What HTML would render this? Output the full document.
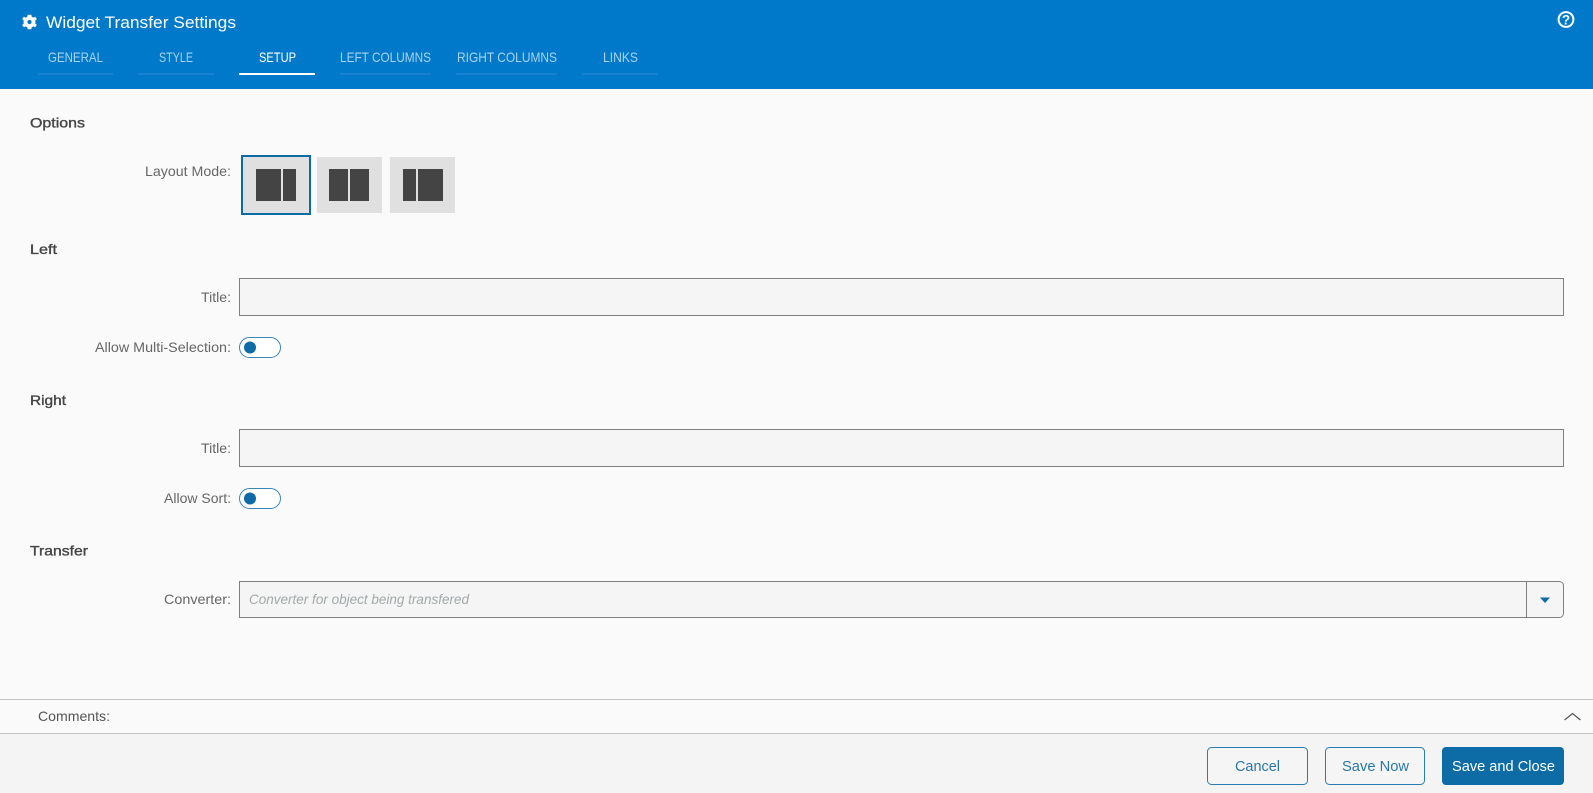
<!DOCTYPE html>
<html lang="en"><head><meta charset="utf-8"><title>Widget Transfer Settings</title>
<style>
html,body{margin:0;padding:0;background:#fafafa;width:1593px;height:793px;overflow:hidden}
svg{display:block;position:absolute;left:0;top:0}
text{font-family:"Liberation Sans",sans-serif;font-size:14px;fill:#666}
.tab{fill:#a9d3ef}
.h{fill:#444;stroke:#444;stroke-width:.35px;font-size:14px}
.u{fill:#1a80d2}
.box{fill:#f5f5f5;stroke:#808080;stroke-width:1}
.tg{fill:#fff;stroke:#3a85b8;stroke-width:1}
.btn{fill:#f5f5f5;stroke:#2a7cb0;stroke-width:1}
.bt{font-size:15px;fill:#2a78ab}
.d{fill:#444}
.lb{fill:#e0e0e0}
</style></head><body>
<svg width="1593" height="793" viewBox="0 0 1593 793" xmlns="http://www.w3.org/2000/svg">
<rect width="1593" height="793" fill="#fafafa"/>
<rect width="1593" height="89" fill="#0079cb"/>

<!-- gear -->
<g transform="translate(29.5,22)" fill="#fff">
<path fill-rule="evenodd" d="M-1.8-7.2H1.8L2.2-5.2C2.8-5 3.3-4.7 3.8-4.4L5.6-5.3 7.4-3 5.8-1.6C5.9-1 5.9-.6 5.9 0S5.9 1 5.8 1.6L7.4 3 5.6 5.3 3.8 4.4C3.3 4.7 2.8 5 2.2 5.2L1.8 7.2H-1.8L-2.2 5.2C-2.8 5-3.3 4.7-3.8 4.4L-5.6 5.3-7.4 3-5.8 1.6C-5.9 1-5.9.6-5.9 0S-5.9-1-5.8-1.6L-7.4-3-5.6-5.3-3.8-4.4C-3.3-4.7-2.8-5-2.2-5.2ZM0-2.1A2.1 2.1 0 1 0 0 2.1 2.1 2.1 0 1 0 0-2.1Z"/>
</g>
<text x="46" y="28" textLength="190" lengthAdjust="spacingAndGlyphs" style="font-size:17px;fill:#fff">Widget Transfer Settings</text>

<!-- help -->
<circle cx="1566" cy="19.5" r="7.4" fill="none" stroke="#fff" stroke-width="2"/>
<text x="1566" y="24.5" text-anchor="middle" style="font-size:13.500px;font-weight:bold;fill:#fff">?</text>

<!-- tabs -->
<rect class="u" x="38" y="73" width="75" height="2"/>
<rect class="u" x="138" y="73" width="76" height="2"/>
<rect x="239" y="73" width="76" height="2" fill="#fff"/>
<rect class="u" x="340" y="73" width="91" height="2"/>
<rect class="u" x="456" y="73" width="101" height="2"/>
<rect class="u" x="582" y="73" width="76" height="2"/>
<text class="tab" x="48" y="62" textLength="55" lengthAdjust="spacingAndGlyphs">GENERAL</text>
<text class="tab" x="159" y="62" textLength="34" lengthAdjust="spacingAndGlyphs">STYLE</text>
<text x="259" y="62" textLength="37" lengthAdjust="spacingAndGlyphs" style="fill:#fff">SETUP</text>
<text class="tab" x="340" y="62" textLength="91" lengthAdjust="spacingAndGlyphs">LEFT COLUMNS</text>
<text class="tab" x="457" y="62" textLength="100" lengthAdjust="spacingAndGlyphs">RIGHT COLUMNS</text>
<text class="tab" x="603" y="62" textLength="35" lengthAdjust="spacingAndGlyphs">LINKS</text>

<!-- headings -->
<text class="h" x="30" y="127.500" textLength="55" lengthAdjust="spacingAndGlyphs">Options</text>
<text class="h" x="30" y="254" textLength="27" lengthAdjust="spacingAndGlyphs">Left</text>
<text class="h" x="30" y="405" textLength="36" lengthAdjust="spacingAndGlyphs">Right</text>
<text class="h" x="30" y="555.500" textLength="58" lengthAdjust="spacingAndGlyphs">Transfer</text>

<!-- labels -->
<text x="145" y="176" textLength="86" lengthAdjust="spacingAndGlyphs">Layout Mode:</text>
<text x="201" y="302" textLength="30" lengthAdjust="spacingAndGlyphs">Title:</text>
<text x="95" y="352" textLength="136" lengthAdjust="spacingAndGlyphs">Allow Multi-Selection:</text>
<text x="201" y="453" textLength="30" lengthAdjust="spacingAndGlyphs">Title:</text>
<text x="164" y="503" textLength="67" lengthAdjust="spacingAndGlyphs">Allow Sort:</text>
<text x="164" y="604" textLength="67" lengthAdjust="spacingAndGlyphs">Converter:</text>

<!-- layout buttons -->
<rect class="lb" x="242" y="156" width="68" height="58" stroke="#0d6ca6" stroke-width="2"/>
<rect class="lb" x="317" y="157" width="65" height="56"/>
<rect class="lb" x="390" y="157" width="65" height="56"/>
<rect class="d" x="256" y="169" width="25" height="32"/>
<rect class="d" x="283" y="169" width="13" height="32"/>
<rect class="d" x="329" y="169" width="19" height="32"/>
<rect class="d" x="350" y="169" width="19" height="32"/>
<rect class="d" x="403" y="169" width="13" height="32"/>
<rect class="d" x="418" y="169" width="25" height="32"/>

<!-- inputs -->
<rect class="box" x="239.500" y="278.500" width="1324" height="37"/>
<rect class="box" x="239.500" y="429.500" width="1324" height="37"/>

<!-- toggles -->
<rect class="tg" x="239.500" y="337.500" width="41" height="20" rx="10"/>
<circle cx="250" cy="347.500" r="6" fill="#0d6ca6"/>
<rect class="tg" x="239.500" y="488.500" width="41" height="20" rx="10"/>
<circle cx="250" cy="498.500" r="6" fill="#0d6ca6"/>

<!-- converter -->
<path class="box" d="M239.500 581.500H1559.500a4 4 0 0 1 4 4V613.500a4 4 0 0 1-4 4H239.500Z"/>
<path d="M1526.500 581.500V617.500" stroke="#808080" fill="none"/>
<path d="M1540 597.500H1550L1545 603Z" fill="#0d6ca6"/>
<text x="249" y="604" textLength="220" lengthAdjust="spacingAndGlyphs" style="font-style:italic;fill:#a3a9ab">Converter for object being transfered</text>

<!-- comments -->
<rect x="0" y="699" width="1593" height="1" fill="#c4c4c4"/>
<rect x="0" y="733" width="1593" height="60" fill="#f4f4f4"/>
<rect x="0" y="733" width="1593" height="1" fill="#c4c4c4"/>
<text x="38" y="721" textLength="72" lengthAdjust="spacingAndGlyphs" style="fill:#555">Comments:</text>
<path d="M1564.500 720L1572.500 713.500 1580.500 720" fill="none" stroke="#555" stroke-width="1.200"/>

<!-- buttons -->
<rect class="btn" x="1207.500" y="747.500" width="100" height="37" rx="4"/>
<rect class="btn" x="1325.500" y="747.500" width="99" height="37" rx="4"/>
<rect x="1442" y="747" width="122" height="38" rx="4" fill="#0d6ca6"/>
<text class="bt" x="1235" y="771" textLength="45" lengthAdjust="spacingAndGlyphs">Cancel</text>
<text class="bt" x="1342" y="771" textLength="67" lengthAdjust="spacingAndGlyphs">Save Now</text>
<text class="bt" x="1452" y="771" textLength="103" lengthAdjust="spacingAndGlyphs" style="fill:#fff">Save and Close</text>
</svg>
</body></html>
